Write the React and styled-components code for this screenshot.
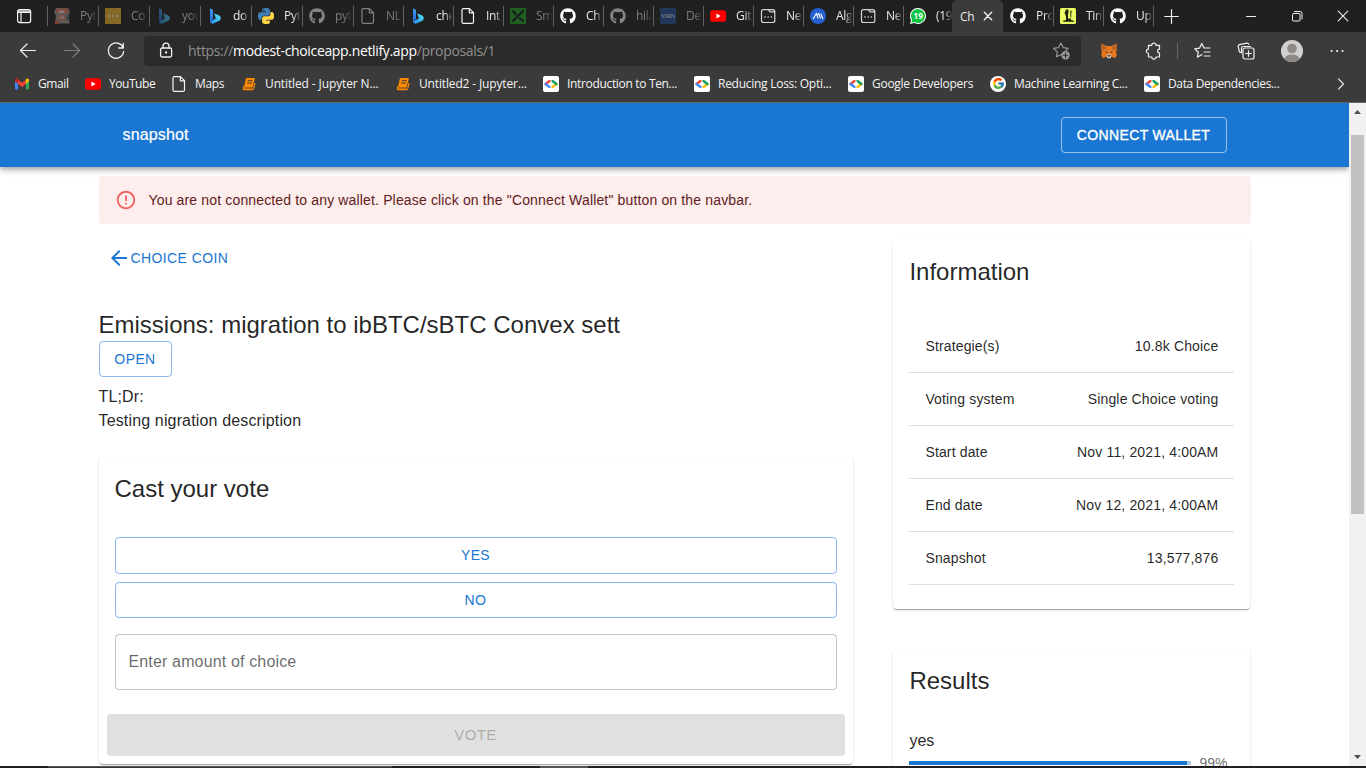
import React from "react";
import styled, { createGlobalStyle, css } from "styled-components";
import { FaGithub } from "react-icons/fa";
import { FcGoogle } from "react-icons/fc";

const GlobalStyle = createGlobalStyle`
  *, *::before, *::after { box-sizing: border-box; }
  html, body { margin: 0; padding: 0; background: #fff; overflow: hidden; }
  svg { display: block; flex: none; }
  button { font: inherit; margin: 0; }
`;

const ui = `"Open Sans", "Noto Sans", sans-serif`;
const page = `"Liberation Sans", Arial, sans-serif`;

/* ---------- window ---------- */

const Window = styled.div`
  width: 1366px;
  height: 768px;
  display: flex;
  flex-direction: column;
  overflow: hidden;
  background: #fff;
`;

const TabStrip = styled.div`
  height: 32px;
  flex: none;
  display: flex;
  align-items: center;
  background: #202020;
  font-family: ${ui};
  font-size: 12px;
  color: #e8e8e8;
`;

const TabActions = styled.div`
  width: 47px;
  flex: none;
  padding-left: 16px;
`;

const Tab = styled.div`
  width: ${(p) => p.$w}px;
  height: 20px;
  flex: none;
  display: flex;
  align-items: center;
  padding-left: 6px;
  border-left: 1px solid ${(p) => (p.$bare ? "transparent" : "#626262")};
  > :first-child { opacity: ${(p) => (p.$dim ? 0.45 : 1)}; }
`;

const TabTitle = styled.span`
  width: 16px;
  margin-left: 10px;
  overflow: hidden;
  white-space: nowrap;
  line-height: 18px;
  color: ${(p) => (p.$dim ? "#7c7c7c" : "#e8e8e8")};
  letter-spacing: -0.3px;
  mask-image: linear-gradient(90deg, #000 55%, rgba(0, 0, 0, 0.1));
`;

const ActiveTab = styled.div`
  width: 51px;
  height: 32px;
  flex: none;
  display: flex;
  align-items: center;
  gap: 9px;
  padding-left: 8px;
  background: #3b3b3b;
  border-radius: 5px 5px 0 0;
  letter-spacing: -0.3px;
`;

const EndOfTabs = styled.div`
  height: 20px;
  flex: 1;
  display: flex;
  align-items: center;
  border-left: 1px solid #626262;
  padding-left: 10px;
`;

const WindowControls = styled.div`
  margin-left: auto;
  display: flex;
  align-items: center;
  gap: 34px;
  padding-right: 17px;
`;

const Toolbar = styled.div`
  height: 37px;
  flex: none;
  display: flex;
  align-items: center;
  background: #3b3b3b;
`;

const NavButtons = styled.div`
  width: 144px;
  flex: none;
  display: flex;
  align-items: center;
  gap: 24px;
  padding-left: 18px;
`;

const AddressBar = styled.div`
  width: 937px;
  height: 30px;
  flex: none;
  display: flex;
  align-items: center;
  padding: 0 10px 0 12px;
  border-radius: 4px;
  margin-top: 1px;
  background: #2b2b2b;
  font-family: ${ui};
  font-size: 14px;
  letter-spacing: -0.34px;
  color: #909090;
  white-space: nowrap;
`;

const Url = styled.span`
  flex: 1;
  margin-left: 12px;
  line-height: 20px;
  b { font-weight: 400; color: #fff; }
`;

const ToolIcons = styled.div`
  flex: 1;
  display: flex;
  align-items: center;
  gap: 26px;
  padding-left: 19px;
`;

const Divider = styled.span`
  width: 1px;
  height: 16px;
  margin: 0 -11px;
  background: #666;
`;

const Bookmarks = styled.div`
  height: 34px;
  flex: none;
  display: flex;
  align-items: center;
  padding: 0 19px 4px 14px;
  background: #3b3b3b;
  border-bottom: 1px solid #666;
  font-family: ${ui};
  font-size: 12px;
  color: #f4f4f4;
`;

const Bookmark = styled.div`
  width: ${(p) => p.$w}px;
  flex: none;
  display: flex;
  align-items: center;
  gap: 8px;
  white-space: nowrap;
  line-height: 18px;
  letter-spacing: ${(p) => p.$ls ?? -0.33}px;
`;

const Chevron = styled.div`
  margin-left: auto;
`;

const DevBadge = styled.span`
  width: 16px;
  height: 16px;
  display: flex;
  align-items: center;
  justify-content: center;
  border-radius: 2px;
  background: #fff;
`;

const SquareIcon = styled.span`
  width: 16px;
  height: 16px;
  flex: none;
  display: flex;
  align-items: center;
  justify-content: center;
  background: ${(p) => p.$bg};
  color: ${(p) => p.$fg};
  border-radius: ${(p) => p.$r || 0}px;
  font: ${(p) => p.$font};
  letter-spacing: -0.3px;
`;

/* ---------- page ---------- */

const Viewport = styled.div`
  height: 663px;
  flex: none;
  display: flex;
`;

const Content = styled.main`
  width: 1349px;
  height: 663px;
  overflow: hidden;
  font-family: ${page};
  font-size: 16px;
  color: rgba(0, 0, 0, 0.87);
`;

const AppBar = styled.header`
  height: 64px;
  display: flex;
  align-items: center;
  justify-content: space-between;
  padding: 0 122px 0 122.5px;
  background: #1976d2;
  color: #fff;
  box-shadow: 0 2px 4px -1px rgba(0, 0, 0, 0.2), 0 4px 5px 0 rgba(0, 0, 0, 0.14),
    0 1px 10px 0 rgba(0, 0, 0, 0.12);
`;

const Brand = styled.span`
  font-size: 16px;
  letter-spacing: 0.15px;
  -webkit-text-stroke: 0.2px #fff;
  line-height: 24px;
`;

const Body = styled.div`
  width: 1152px;
  margin: 9px 0 0 98.5px;
`;

const Alert = styled.div`
  height: 48px;
  display: flex;
  align-items: center;
  gap: 12px;
  padding: 0 16px;
  border-radius: 4px;
  background: #fdeded;
  color: #5f2120;
  font-size: 14px;
  letter-spacing: 0.15px;
`;

const Columns = styled.div`
  display: flex;
  gap: 40.9px;
  margin-top: 16px;
`;

const LeftColumn = styled.section`
  width: 754px;
  flex: none;
`;

const RightColumn = styled.aside`
  width: 357px;
  flex: none;
  display: flex;
  flex-direction: column;
  gap: 40px;
`;

const buttonText = css`
  font-family: ${page};
  font-size: 14px;
  line-height: 24.5px;
  letter-spacing: 0.4px;
  text-transform: uppercase;
`;

const BackLink = styled.button`
  ${buttonText}
  display: flex;
  align-items: center;
  height: 36px;
  padding: 0 8px;
  border: 0;
  background: none;
  color: #1976d2;
`;

const OutlinedButton = styled.button`
  ${buttonText}
  width: ${(p) => p.$w || "auto"};
  height: ${(p) => p.$h || 36}px;
  margin-top: ${(p) => p.$mt || 0}px;
  padding: 0;
  border: 1px solid ${(p) => (p.$light ? "rgba(255,255,255,0.55)" : "rgba(25,118,210,0.5)")};
  border-radius: 4px;
  background: none;
  color: ${(p) => (p.$light ? "#fff" : "#1976d2")};
  ${(p) => p.$light && css`
    letter-spacing: 0.36px;
    padding-right: 1px;
    -webkit-text-stroke: 0.35px #fff;
  `}
`;

const Heading = styled.h5`
  margin: 0;
  font-size: 24px;
  font-weight: 400;
  line-height: 32px;
`;

const ProposalTitle = styled(Heading)`
  margin-top: 33px;
`;

const Description = styled.div`
  margin-top: 8px;
  line-height: 24px;
  letter-spacing: 0.15px;
`;

const Card = styled.div`
  padding: 16px;
  border-radius: 4px;
  background: #fff;
  box-shadow: 0 2px 1px -1px rgba(0, 0, 0, 0.2), 0 1px 1px 0 rgba(0, 0, 0, 0.14),
    0 1px 3px 0 rgba(0, 0, 0, 0.12);
`;

const VoteCard = styled(Card)`
  height: 307px;
  margin-top: 24px;
  padding: 16px 8px 8px;
`;

const VoteForm = styled.div`
  display: flex;
  flex-direction: column;
  gap: 8px;
  padding: 0 8px;
`;

const AmountField = styled.div`
  height: 56px;
  margin-top: 8px;
  display: flex;
  align-items: center;
  padding: 0 13px;
  border: 1px solid rgba(0, 0, 0, 0.23);
  border-radius: 4px;
  color: rgba(0, 0, 0, 0.6);
  letter-spacing: 0.15px;
`;

const VoteButton = styled.button`
  ${buttonText}
  width: 100%;
  height: 42px;
  margin-top: 24px;
  padding: 0;
  border: 0;
  border-radius: 4px;
  background: #e0e0e0;
  color: rgba(0, 0, 0, 0.26);
  font-size: 15px;
  letter-spacing: 0.43px;
`;

const InfoRows = styled.dl`
  margin: 32px 0 8px;
`;

const InfoRow = styled.div`
  height: 53px;
  display: flex;
  align-items: center;
  justify-content: space-between;
  padding: 0 16px;
  border-bottom: 1px solid #e0e0e0;
  font-size: 14px;
  letter-spacing: 0.15px;
  dd { margin: 0; }
`;

const Choice = styled.div`
  margin-top: 32px;
  line-height: 24px;
`;

const ChoiceResult = styled.div`
  display: flex;
  align-items: center;
  gap: 8px;
  height: 20px;
  font-size: 14px;
  color: rgba(0, 0, 0, 0.6);
`;

const Track = styled.div`
  width: 282px;
  height: 4px;
  background: #a7caed;
`;

const Fill = styled.div`
  height: 100%;
  background: #1976d2;
`;

const Scrollbar = styled.div`
  width: 17px;
  display: flex;
  flex-direction: column;
  align-items: center;
  background: #f1f1f1;
`;

const ScrollArrow = styled.div`
  height: ${(p) => p.$h}px;
  padding-top: ${(p) => p.$pt}px;
`;

const Thumb = styled.div`
  width: 13px;
  height: 379px;
  background: #c1c1c1;
`;

const Taskbar = styled.div`
  height: 2px;
  flex: none;
  display: flex;
  background: #231f20;
`;

const TaskSegment = styled.span`
  width: ${(p) => p.$w}px;
  background: ${(p) => p.$bg || "transparent"};
  border-top: ${(p) => (p.$edge ? `1px solid ${p.$edge}` : "0")};
`;

/* ---------- icons ---------- */

const Line = ({ w = 16, h = w, vb = `0 0 ${w} ${h}`, color = "#f0f0f0", sw = 1.1, children }) => (
  <svg width={w} height={h} viewBox={vb} fill="none" stroke={color} strokeWidth={sw} strokeLinecap="round" strokeLinejoin="round">
    {children}
  </svg>
);

const FileIcon = () => (
  <Line color="#f4f4f4" sw={1.2}>
    <path d="M3.5.6h6l4 4v9.3q0 1.5-1.5 1.5H3.5Q2 15.400 2 13.900V2.100Q2 .6 3.500.6zM9.300.8v4h4" />
  </Line>
);

const BingIcon = () => (
  <svg width="16" height="16" viewBox="0 0 16 16">
    <defs>
      <linearGradient id="bingStem" x1="0" y1="0" x2="0" y2="1">
        <stop offset="0" stopColor="#3fa2ee" />
        <stop offset="1" stopColor="#1f62d8" />
      </linearGradient>
      <linearGradient id="bingLeaf" x1="1" y1="0.3" x2="0" y2="1">
        <stop offset="0" stopColor="#4fdcf2" />
        <stop offset="1" stopColor="#2486ea" />
      </linearGradient>
    </defs>
    <path d="M3 .5l3 1.200v9.300L3 14z" fill="url(#bingStem)" />
    <path d="M7.200 5.200l5 2.300c2 1.100 2 4 .2 5.200L6.500 15.600C5 16 3.300 15 3 13.500l5.800-3z" fill="url(#bingLeaf)" />
  </svg>
);

const PythonIcon = () => (
  <svg width="16" height="16" viewBox="0 0 24 24">
    <path fill="#3f7fb5" d="M14.25.18l.9.2.73.26.59.3.45.32.34.34.25.34.16.33.1.3.04.26.02.2-.01.13V8.5l-.05.63-.13.55-.21.46-.26.38-.3.31-.33.25-.35.19-.35.14-.33.1-.3.07-.26.04-.21.02H8.77l-.69.05-.59.14-.5.22-.41.27-.33.32-.27.35-.2.36-.15.37-.1.35-.07.32-.04.27-.02.21v3.06H3.17l-.21-.03-.28-.07-.32-.12-.35-.18-.36-.26-.36-.36-.35-.46-.32-.59-.28-.73-.21-.88-.14-1.05-.05-1.23.06-1.22.16-1.04.24-.87.32-.71.36-.57.4-.44.42-.33.42-.24.4-.16.36-.1.32-.05.24-.01h.16l.06.01h8.16v-.83H6.18l-.01-2.75-.02-.37.05-.34.11-.31.17-.28.25-.26.31-.23.38-.2.44-.18.51-.15.58-.12.64-.1.71-.06.77-.04.84-.02 1.27.05zm-6.3 1.98l-.23.33-.08.41.08.41.23.34.33.22.41.09.41-.09.33-.22.23-.34.08-.41-.08-.41-.23-.33-.33-.22-.41-.09-.41.09z" />
    <path fill="#ffd545" d="M21.1 6.11l.28.06.32.12.35.18.36.27.36.35.35.47.32.59.28.73.21.88.14 1.04.05 1.23-.06 1.23-.16 1.04-.24.86-.32.71-.36.57-.4.45-.42.33-.42.24-.4.16-.36.09-.32.05-.24.02-.16-.01h-8.22v.82h5.84l.01 2.76.02.36-.05.34-.11.31-.17.29-.25.25-.31.24-.38.2-.44.17-.51.15-.58.13-.64.09-.71.07-.77.04-.84.01-1.27-.04-1.07-.14-.9-.2-.73-.25-.59-.3-.45-.33-.34-.34-.25-.34-.16-.33-.1-.3-.04-.25-.02-.2.01-.13v-5.34l.05-.64.13-.54.21-.46.26-.38.3-.32.33-.24.35-.2.35-.14.33-.1.3-.06.26-.04.21-.02.13-.01h5.84l.69-.05.59-.14.5-.21.41-.28.33-.32.27-.35.2-.36.15-.36.1-.35.07-.32.04-.28.02-.21V6.07h2.09l.14.01z" />
  </svg>
);

const YouTubeIcon = () => (
  <svg width="16" height="16" viewBox="0 0 16 16">
    <rect x="0" y="2.300" width="16" height="11.400" rx="2.800" fill="#f00" />
    <path d="M6.400 5.600L10.600 8l-4.200 2.400z" fill="#fff" />
  </svg>
);

const PagesIcon = () => (
  <Line color="#d6d6d6" sw={1.2}>
    <path d="M3.500 1.600h5l1.300 2.200h5v8.700q0 2-2 2H3.500q-2 0-2-2v-9q0-1.900 2-1.900zM9 1.600h3.800q2 0 2 2.200" />
    <path d="M4.800 9h.3M8 9h.3M11.200 9h.3" strokeWidth="1.300" />
  </Line>
);

const DotsSquare = () => (
  <svg width="16" height="16" viewBox="0 0 16 16">
    <rect width="16" height="16" fill="#ffc12e" />
    <path d="M3 7h2v2H3zM7 7h2v2H7zM11 7h2v2h-2z" fill="#fff" />
  </svg>
);

const JarIcon = () => (
  <svg width="16" height="16" viewBox="0 0 16 16">
    <path d="M2 0h12l2 4-1.500 3 1 8.500H1L2 8 0 4z" fill="#a8a09a" />
    <path d="M2.500.5h11l1.500 3-3 2-9-.5L1 3z" fill="#f0775c" />
    <path d="M4.500 2.500h6v2.500h-6z" fill="#ffe6dc" />
    <path d="M3.500 8l4.500-1.500L12 9l-1.500 4-5.500-1z" fill="#ee8a70" />
    <path d="M6 8.500h4v2H6z" fill="#e9ded8" />
    <path d="M12 7h2.500v5.500H12z" fill="#6a727c" />
    <path d="M1 12.500h4V16H1z" fill="#f2654c" />
  </svg>
);

const CrossSquare = () => (
  <svg width="16" height="16" viewBox="0 0 16 16">
    <rect width="16" height="16" fill="#1fae26" />
    <path d="M2.500 2.500l4 4.500M13.500 2.500L2.500 13.500M9 9.500l4.500 4" stroke="#10151f" strokeWidth="2.200" />
  </svg>
);

const PeaksIcon = () => (
  <svg width="16" height="16" viewBox="0 0 16 16">
    <circle cx="8" cy="8" r="8" fill="#2660d0" />
    <path d="M3.300 10.700l3-5.200 1.700 4.500M7.500 7l1.300-1.500 1.500 4.500M11 6l1.700 4.700" stroke="#fff" strokeWidth="1.100" fill="none" strokeLinecap="round" />
  </svg>
);

const StatueIcon = () => (
  <svg width="16" height="16" viewBox="0 0 16 16">
    <rect width="16" height="16" rx="1.500" fill="#e9fb62" />
    <path d="M6 1.500h2.500v3l-.5 2v4h3v1.500l3 .8v1h-11v-1l3-.8V8L4.500 5zM10.500 2.500l1.500 1-.8 1.500v5l-.9-1.500V5z" fill="#1c2110" />
  </svg>
);

const GmailIcon = () => (
  <svg width="16" height="16" viewBox="0 0 16 16">
    <path d="M1 4v8.500q0 1 1 1h2V6.500z" fill="#4285f4" />
    <path d="M15 4v8.500q0 1-1 1h-2V6.500z" fill="#34a853" />
    <path d="M4 3.800l4 3 4-3v4.100l-4 3-4-3z" fill="#ea4335" />
    <path d="M1 4.300C1 2.500 3 2 4.200 3.100V7.800L1 5.500z" fill="#c5221f" />
    <path d="M15 4.300c0-1.800-2-2.300-3.200-1.200V7.800L15 5.500z" fill="#fbbc04" />
  </svg>
);

const BookIcon = () => (
  <svg width="16" height="16" viewBox="0 0 16 16">
    <path d="M5 2h8q1 0 .8 1l-2.200 8H3z" fill="#ff8a00" />
    <path d="M3 10.200q-1.600 3.500.4 3.500h8q1 0 1.300-1L14 7" fill="none" stroke="#ff8a00" strokeWidth="1.200" />
    <path d="M3 11.300h8.500l-.4 1.500H3z" fill="#d97500" />
    <path d="M6.800 4.700h4.700M6.200 7h4.700" stroke="#3b3b3b" strokeWidth="1" />
  </svg>
);

const DevIcon = () => (
  <DevBadge>
    <svg width="14" height="8" viewBox="0 0 14 8">
      <path d="M5.500 1L1.500 4" stroke="#ea4335" strokeWidth="2.200" strokeLinecap="round" />
      <path d="M1.500 4l4 3" stroke="#4285f4" strokeWidth="2.200" strokeLinecap="round" />
      <path d="M8.500 7l4-3" stroke="#fbbc04" strokeWidth="2.200" strokeLinecap="round" />
      <path d="M8.500 1l4 3" stroke="#0f9d58" strokeWidth="2.200" strokeLinecap="round" />
    </svg>
  </DevBadge>
);

const GoogleIcon = () => (
  <SquareIcon $bg="#fff" $r={8}>
    <FcGoogle size={13} />
  </SquareIcon>
);

const ChatIcon = () => (
  <svg width="16" height="16" viewBox="0 0 16 16">
    <path d="M8 0a8 8 0 1 1-3.700 15.100L0 16l1-4A8 8 0 0 1 8 0z" fill="#fff" />
    <path d="M8 1a7 7 0 1 1-3.600 13L1.400 14.700l.7-3A7 7 0 0 1 8 1z" fill="#10c443" />
    <text x="8.200" y="10.800" textAnchor="middle" fontFamily="Open Sans" fontWeight="700" fontSize="8" fill="#fff">19</text>
  </svg>
);

const FoxIcon = () => (
  <svg width="18" height="18" viewBox="0 0 18 18">
    <path d="M1.500 1.500l5 2.500h5l5-2.500.5 5-1 4 .9 2.500-1.500 3-4-1.200-1.700 1.400H8.300l-1.700-1.400-4 1.200-1.500-3L2 10.500 1 6.500z" fill="#e8781e" />
    <path d="M1.500 1.500l5 2.500-.6 3.500-3.700 1L1 6.500zM16.500 1.500l-5 2.500.6 3.500 3.700 1L17 6.500z" fill="#b8652a" />
    <path d="M5 9.200l2.500.6-.3 1.500zM13 9.200l-2.500.6.3 1.500z" fill="#2c3540" />
    <path d="M6.500 13l1.500-.8h2l1.500.8-.8 3.200H7.300z" fill="#d6c3b5" />
    <path d="M7.400 13.300h3.200l-.5 1.200H7.900z" fill="#23272e" />
  </svg>
);

const Avatar = () => (
  <svg width="22" height="22" viewBox="0 0 22 22">
    <defs>
      <clipPath id="avatarClip"><circle cx="11" cy="11" r="11" /></clipPath>
    </defs>
    <g clipPath="url(#avatarClip)">
      <rect width="22" height="22" fill="#d2d0ce" />
      <circle cx="11" cy="8.500" r="4.800" fill="#8d8986" />
      <ellipse cx="11" cy="19" rx="7.500" ry="4.500" fill="#8d8986" />
    </g>
  </svg>
);

const AlertIcon = () => (
  <svg width="22" height="22" viewBox="0 0 24 24" fill="#ef5350" opacity="0.9">
    <path d="M11 15h2v2h-2zm0-8h2v6h-2zm.99-5C6.47 2 2 6.48 2 12s4.470 10 9.990 10C17.520 22 22 17.520 22 12S17.520 2 11.990 2zM12 20c-4.420 0-8-3.580-8-8s3.580-8 8-8 8 3.580 8 8-3.580 8-8 8z" />
  </svg>
);

const BackArrow = () => (
  <svg width="24" height="24" viewBox="0 0 24 24" fill="#1976d2">
    <path d="M20 11H7.830l5.590-5.590L12 4l-8 8 8 8 1.410-1.410L7.830 13H20v-2z" />
  </svg>
);

const GitHub = () => <FaGithub size={16} color="#fff" />;

/* ---------- data ---------- */

const tabs = [
  { title: "Python", icon: <JarIcon />, dim: true, w: 51 },
  { title: "Co", icon: <DotsSquare />, dim: true, w: 51 },
  { title: "you", icon: <BingIcon />, dim: true, w: 51 },
  { title: "do", icon: <BingIcon />, w: 51 },
  { title: "Python", icon: <PythonIcon />, w: 51 },
  { title: "python", icon: <GitHub />, dim: true, w: 51 },
  { title: "NL", icon: <FileIcon />, dim: true, w: 50 },
  { title: "che", icon: <BingIcon />, w: 50 },
  { title: "Int", icon: <FileIcon />, w: 50 },
  { title: "Sm", icon: <CrossSquare />, dim: true, w: 50 },
  { title: "Ch", icon: <GitHub />, w: 50 },
  { title: "hila", icon: <GitHub />, dim: true, w: 50 },
  { title: "De", icon: <SquareIcon $bg="#2451a4" $fg="#fff" $font="6px 'Liberation Serif'">SSRN</SquareIcon>, dim: true, w: 50 },
  { title: "Git", icon: <YouTubeIcon />, w: 50 },
  { title: "Ne", icon: <PagesIcon />, w: 50 },
  { title: "Alg", icon: <PeaksIcon />, w: 50 },
  { title: "Ne", icon: <PagesIcon />, w: 50 },
  { title: "(19)", icon: <ChatIcon />, w: 49 },
];

const tabsAfter = [
  { title: "Pro", icon: <GitHub />, w: 50, bare: true },
  { title: "Tim", icon: <StatueIcon />, w: 50 },
  { title: "Up", icon: <GitHub />, w: 50 },
];

const bookmarks = [
  { label: "Gmail", icon: <GmailIcon />, w: 71, ls: -0.4 },
  { label: "YouTube", icon: <YouTubeIcon />, w: 86, ls: -0.45 },
  { label: "Maps", icon: <FileIcon />, w: 70 },
  { label: "Untitled - Jupyter N...", icon: <BookIcon />, w: 154, ls: -0.12 },
  { label: "Untitled2 - Jupyter...", icon: <BookIcon />, w: 148, ls: -0.15 },
  { label: "Introduction to Ten...", icon: <DevIcon />, w: 151 },
  { label: "Reducing Loss: Opti...", icon: <DevIcon />, w: 154, ls: -0.27 },
  { label: "Google Developers", icon: <DevIcon />, w: 142, ls: -0.27 },
  { label: "Machine Learning C...", icon: <GoogleIcon />, w: 154, ls: -0.3 },
  { label: "Data Dependencies...", icon: <DevIcon />, w: 150, ls: -0.35 },
];

const info = [
  ["Strategie(s)", "10.8k Choice"],
  ["Voting system", "Single Choice voting"],
  ["Start date", "Nov 11, 2021, 4:00AM"],
  ["End date", "Nov 12, 2021, 4:00AM"],
  ["Snapshot", "13,577,876"],
];

const renderTab = (t, i) => (
  <Tab key={i} $w={t.w} $dim={t.dim} $bare={t.bare}>
    {t.icon}
    <TabTitle $dim={t.dim}>{t.title}</TabTitle>
  </Tab>
);

export default function App() {
  const yesShare = 98.5;
  return (
    <Window>
      <GlobalStyle />
      <TabStrip>
        <TabActions>
          <Line color="#f4f4f4" sw={1.2}>
            <rect x="1.600" y="1.600" width="13" height="13" rx="2" />
            <path d="M1.600 3h13M1.600 4.300h13M5 4.500v10" />
          </Line>
        </TabActions>
        {tabs.map(renderTab)}
        <ActiveTab>
          <span>Ch</span>
          <Line w={10} sw={1.4}><path d="M1.300 1.300l7.400 7.400M8.700 1.300L1.300 8.700" /></Line>
        </ActiveTab>
        {tabsAfter.map(renderTab)}
        <EndOfTabs>
          <Line w={15} sw={1.2}><path d="M7.500.7v13.600M.7 7.500h13.600" /></Line>
          <WindowControls>
            <Line w={12} sw={1}><path d="M1.500 6.500h9" /></Line>
            <Line w={12} sw={1}>
              <rect x="1.500" y="3.500" width="7.500" height="7.500" rx="1" />
              <path d="M3.500 1.500H9q2 0 2 2V9" />
            </Line>
            <Line w={12} sw={1.1}><path d="M1.200 1.200l9.600 9.600M10.800 1.200l-9.600 9.600" /></Line>
          </WindowControls>
        </EndOfTabs>
      </TabStrip>

      <Toolbar>
        <NavButtons>
          <Line w={20} sw={1.2}><path d="M17.500 9.500h-15M9 3L2.500 9.500 9 16" /></Line>
          <Line w={20} sw={1.2} color="#7c7c7c"><path d="M2.500 9.500h15M11 3l6.500 6.500L11 16" /></Line>
          <Line w={20} sw={1.3}><path d="M17.200 7A7.600 7.600 0 1 0 17.600 10.500M17.300 2.500V7H12.700" /></Line>
        </NavButtons>
        <AddressBar>
          <Line w={20} sw={1.3}>
            <rect x="4.600" y="7" width="11" height="9" rx="1.500" />
            <path d="M7 7V5.200a3 3 0 0 1 6 0V7" />
            <circle cx="10.100" cy="11.500" r=".5" fill="#f0f0f0" />
          </Line>
          <Url>
            https://<b>modest-choiceapp.netlify.app</b>/proposals/1
          </Url>
          <Line w={20} sw={1.1} color="#9a9a9a">
            <path d="M10 13.500l-4.600 2.300.9-5L2.600 7.300l5-.7L9.900 2l2.300 4.600 5 .7L14.800 9.500" />
            <circle cx="14.500" cy="14.200" r="4.200" fill="#9a9a9a" stroke="none" />
            <path d="M14.500 12v4.400M12.300 14.200h4.400" stroke="#2b2b2b" />
          </Line>
        </AddressBar>
        <ToolIcons>
          <FoxIcon />
          <Line w={18} sw={1.2}>
            <path d="M4.500 3.300H7.800a2.100 2.100 0 0 1 4.200 0H15.500V7.200a1.900 1.900 0 0 0 0 3.800V15H12a2.100 2.100 0 0 1-4.200 0H4.500V11.300a2.100 2.100 0 0 1 0-4.200z" />
          </Line>
          <Divider />
          <Line w={18} sw={1.2}>
            <path d="M9 12.500l-4.600 2.700.9-5L1.700 6.800l4.900-.7L8.800 1.500l2.100 4.300M11 6h6M11 10h6M11 14h6" />
          </Line>
          <Line w={18} sw={1.2}>
            <path d="M4.200 10.800L2.500 10 1.200 4.500q-.3-1.500 1.200-1.900l7.500-1.500q1.500-.2 1.900 1.200M13.500 4.500H6.500q-2 0-2 2v4" />
            <rect x="6" y="6" width="11" height="11" rx="2" />
            <path d="M11.500 8.700v5.600M8.700 11.500h5.600" />
          </Line>
          <Avatar />
          <Line w={16} color="#f4f4f4" sw={2}><path d="M2.500 8h.1M8 8h.1M13.500 8h.1" /></Line>
        </ToolIcons>
      </Toolbar>

      <Bookmarks>
        {bookmarks.map((b, i) => (
          <Bookmark key={i} $w={b.w} $ls={b.ls}>
            {b.icon}
            <span>{b.label}</span>
          </Bookmark>
        ))}
        <Chevron>
          <Line w={12} sw={1.3} color="#d8d8d8"><path d="M3.500 1l5 5-5 5" /></Line>
        </Chevron>
      </Bookmarks>

      <Viewport>
        <Content>
          <AppBar>
            <Brand>snapshot</Brand>
            <OutlinedButton $light $w="166px">Connect Wallet</OutlinedButton>
          </AppBar>
          <Body>
            <Alert>
              <AlertIcon />
              <span>You are not connected to any wallet. Please click on the "Connect Wallet" button on the navbar.</span>
            </Alert>
            <Columns>
              <LeftColumn>
                <BackLink><BackArrow />Choice Coin</BackLink>
                <ProposalTitle>Emissions: migration to ibBTC/sBTC Convex sett</ProposalTitle>
                <OutlinedButton $w="73px">Open</OutlinedButton>
                <Description>
                  <div>TL;Dr:</div>
                  <div>Testing nigration description</div>
                </Description>
                <VoteCard>
                  <VoteForm>
                    <Heading>Cast your vote</Heading>
                    <OutlinedButton $w="100%" $h={37} $mt={24}>Yes</OutlinedButton>
                    <OutlinedButton $w="100%">No</OutlinedButton>
                    <AmountField>Enter amount of choice</AmountField>
                  </VoteForm>
                  <VoteButton>Vote</VoteButton>
                </VoteCard>
              </LeftColumn>
              <RightColumn>
                <Card>
                  <Heading>Information</Heading>
                  <InfoRows>
                    {info.map(([k, v]) => (
                      <InfoRow key={k}>
                        <dt>{k}</dt>
                        <dd>{v}</dd>
                      </InfoRow>
                    ))}
                  </InfoRows>
                </Card>
                <Card>
                  <Heading>Results</Heading>
                  <Choice>yes</Choice>
                  <ChoiceResult>
                    <Track><Fill style={{ width: `${yesShare}%` }} /></Track>
                    <span>99%</span>
                  </ChoiceResult>
                </Card>
              </RightColumn>
            </Columns>
          </Body>
        </Content>
        <Scrollbar>
          <ScrollArrow $h={32} $pt={7}>
            <svg width="7" height="4" viewBox="0 0 7 4"><path d="M0 4L3.500 0 7 4z" fill="#505050" /></svg>
          </ScrollArrow>
          <Thumb />
          <ScrollArrow $h={252} $pt={241}>
            <svg width="7" height="4" viewBox="0 0 7 4"><path d="M0 0l3.500 4L7 0z" fill="#505050" /></svg>
          </ScrollArrow>
        </Scrollbar>
      </Viewport>

      <Taskbar>
        <TaskSegment $w={48} />
        <TaskSegment $w={344} $bg="#3a3637" $edge="#5c595a" />
        <TaskSegment $w={148} />
        <TaskSegment $w={48} $bg="#555253" />
      </Taskbar>
    </Window>
  );
}
